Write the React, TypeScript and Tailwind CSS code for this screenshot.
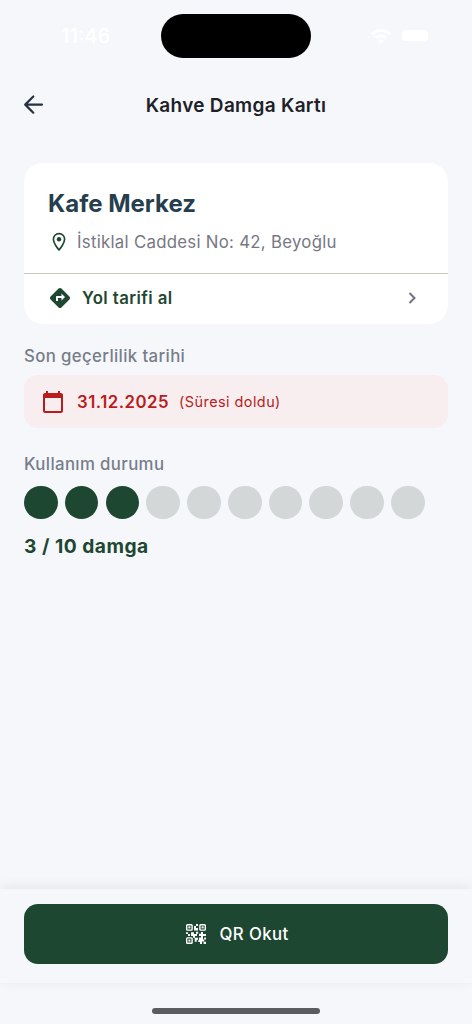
import { MdCalendarToday, MdDirections } from "react-icons/md";

const TOTAL_STAMPS = 10;
const USED_STAMPS = 3;

const QrIcon = () => (
  <svg viewBox="0 0 20 20" className="size-[20px]" fill="none">
    {[[0, 0], [13.2, 0], [0, 13.2]].map(([x, y]) => (
      <g key={`${x}-${y}`}>
        <rect x={x + 0.7} y={y + 0.7} width="5.4" height="5.4" rx="0.8" stroke="currentColor" strokeWidth="1.4" />
        <rect x={x + 2.4} y={y + 2.4} width="2" height="2" fill="currentColor" />
      </g>
    ))}
    <path
      d="M10 0h2v2h-2zM8 2h2v2h2v2.4H8zM0 8.2h2v1.9H0zM2 10h2v1.9H2zM5 8.2h3v1.9h3V12H9v1.8H7V12H5zM10 7.8h2.2v2H10zM13 9.8h2V8h2v2h3v2h-3v1.6h-2V12h-2zM8.6 13.8H12v2h-1.3v2H8.8zM13 13.6h4v2h1.2v2H16v2.4h-2v-2h-1.8v-1.8H13zM18.2 13.6H20v2h-1.8zM17.6 17.8H20V20h-2.4z"
      fill="currentColor"
    />
  </svg>
);

const PinIcon = () => (
  <svg viewBox="0 0 24 24" className="size-[22px] text-[#1e4731]" fill="none">
    <path
      d="M12 2.9c-3.5 0-6.1 2.7-6.1 6.1 0 4.2 4.6 10 6.1 11.5 1.5-1.5 6.1-7.3 6.1-11.5 0-3.4-2.6-6.1-6.1-6.1z"
      stroke="currentColor"
      strokeWidth="1.8"
    />
    <circle cx="12" cy="9" r="2.4" fill="currentColor" />
  </svg>
);

const StatusBar = () => (
  <div className="grid h-[72px] grid-cols-[161px_150px_161px] items-center text-white">
    <span className="pl-[61px] text-[20px] font-semibold leading-6">11:46</span>
    <div className="h-[44px] w-[150px] rounded-full bg-black" />
    <div className="flex items-center justify-end gap-[11px] pr-[44px]">
      <div className="-mr-[5px] flex gap-[4px] pt-2 opacity-40">
        {[0, 1, 2, 3].map((dot) => (
          <span key={dot} className="size-[2px] rounded-full bg-white" />
        ))}
      </div>
      <svg viewBox="0 0 20 15" className="h-[15px] w-[20px]" fill="none" stroke="currentColor" strokeWidth="3">
        <path d="M1.2 5.2a12.5 12.5 0 0 1 17.6 0" />
        <path d="M4.6 8.9a7.7 7.7 0 0 1 10.8 0" />
        <path d="M10 14.8 7 11.8a4.3 4.3 0 0 1 6 0z" fill="currentColor" stroke="none" />
      </svg>
      <div className="mb-[2px] h-[11px] w-[26px] rounded-[4px] bg-white" />
    </div>
  </div>
);

const Header = () => (
  <header className="grid h-[66px] grid-cols-[60px_1fr_60px] items-center">
    <button className="pl-[22px]" aria-label="Geri">
      <svg viewBox="0 0 24 24" className="size-6 text-[#263142]" fill="none" stroke="currentColor" strokeWidth="2.2" strokeLinecap="round" strokeLinejoin="round">
        <path d="M20 11.6H3.6M11.3 3.5 3.2 11.6l8.1 8.1" />
      </svg>
    </button>
    <h1 className="pt-[2px] text-center text-[19px] font-semibold tracking-[0.3px] text-[#202027]">Kahve Damga Kartı</h1>
  </header>
);

const CafeCard = () => (
  <section className="h-[161px] overflow-hidden rounded-[19px] bg-white">
    <div className="h-[111px] border-b border-[#c3c8bc] px-6 pt-6">
      <h2 className="text-[24px] font-bold leading-[34px] tracking-[0px] text-[#263e4e]">Kafe Merkez</h2>
      <div className="mt-[9px] flex items-center">
        <PinIcon />
        <span className="ml-[7px] text-[16.8px] leading-6 tracking-[0.28px] text-[#777783]">İstiklal Caddesi No: 42, Beyoğlu</span>
      </div>
    </div>
    <button className="flex h-[48px] w-full items-center pl-6 pr-[24px]">
      <MdDirections className="size-6 text-[#1e4731]" />
      <span className="ml-[10px] text-[16.8px] font-semibold leading-6 tracking-[0.4px] text-[#1e4731]">Yol tarifi al</span>
      <svg viewBox="0 0 24 24" className="ml-auto size-6 text-[#6f7280]" fill="none" stroke="currentColor" strokeWidth="2">
        <path d="m9.5 7 5 5-5 5" />
      </svg>
    </button>
  </section>
);

const Validity = () => (
  <section className="mt-5">
    <h3 className="text-[16.8px] font-medium leading-6 tracking-[0.37px] text-[#777d8a]">Son geçerlilik tarihi</h3>
    <div className="mt-[7px] flex h-[53px] items-center rounded-[14px] bg-[#f8edef] pl-[17px] text-[#b91c1c]">
      <MdCalendarToday className="size-6" />
      <span className="ml-[12px] text-[16.8px] font-semibold leading-6 tracking-[0.5px]">31.12.2025</span>
      <span className="ml-[10px] text-[14.4px] tracking-[0.47px]">(Süresi doldu)</span>
    </div>
  </section>
);

const Stamps = () => (
  <section className="mt-6">
    <h3 className="text-[16.8px] font-medium leading-6 tracking-[0.37px] text-[#777d8a]">Kullanım durumu</h3>
    <div className="mt-[9.5px] flex gap-[7.2px]">
      {Array.from({ length: TOTAL_STAMPS }, (_, i) => (
        <span
          key={i}
          className={`size-[33.6px] rounded-full ${i < USED_STAMPS ? "bg-[#1e4731]" : "bg-[#d3d7d8]"}`}
        />
      ))}
    </div>
    <p className="mt-[12.5px] text-[19.2px] font-bold leading-7 tracking-[0.5px] text-[#1e4731]">
      {USED_STAMPS} / {TOTAL_STAMPS} damga
    </p>
  </section>
);

export default function App() {
  return (
    <div className="flex h-[1024px] w-[472px] flex-col bg-[#f5f7fb] font-['Inter','Liberation_Sans',sans-serif]">
      <StatusBar />
      <Header />
      <main className="flex-1 px-6 pt-[25px]">
        <CafeCard />
        <Validity />
        <Stamps />
      </main>
      <div className="h-[94px] bg-[#f5f7fb] px-6 pt-[15px] shadow-[0_-2px_12px_rgba(0,0,0,0.08)]">
        <button className="flex h-[60px] w-full items-center justify-center rounded-[14px] bg-[#1e4731] pl-[3px] text-white">
          <QrIcon />
          <span className="ml-[13px] text-[16.8px] font-medium leading-6 tracking-[0.4px]">QR Okut</span>
        </button>
      </div>
      <div className="flex h-[41px] justify-center pt-[25px]">
        <div className="h-[6px] w-[168px] rounded-full bg-[#5b5c60]" />
      </div>
    </div>
  );
}
